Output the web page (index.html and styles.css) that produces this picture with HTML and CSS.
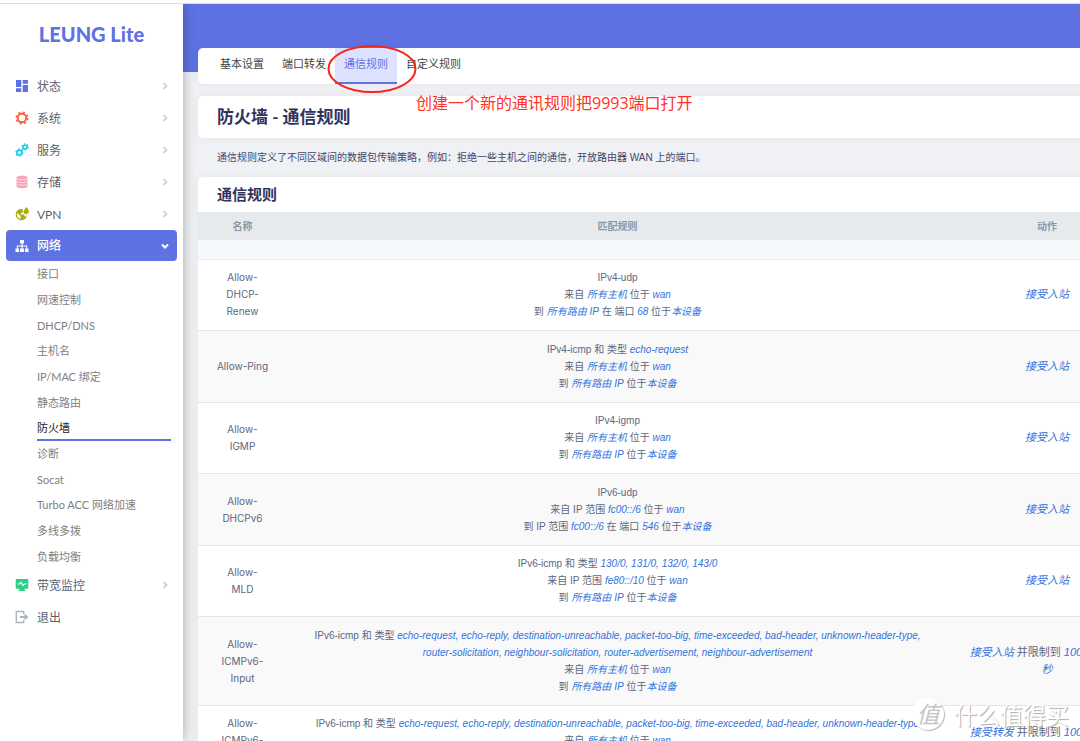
FILE: index.html
```html
<!DOCTYPE html>
<html lang="zh-CN">
<head>
<meta charset="utf-8">
<title>LEUNG Lite - 防火墙</title>
<link rel="stylesheet" href="styles.css">
</head>
<body>
<div class="app">
  <aside class="sidebar">
    <a class="brand" href="#">LEUNG Lite</a>
    <nav>
      <ul class="menu">
        <li><a class="item" href="#"><svg class="icon" viewBox="0 0 14 14" fill="#5e72e4"><path d="M1 1h5.300v7H1zM7.700 1H13v3.800H7.700zM1 9.300h5.300V13H1zM7.700 6H13v7H7.700z"/></svg><span>状态</span><svg class="chev" viewBox="0 0 8 8"><path d="M2.500 1l3 3-3 3"/></svg></a></li>
        <li><a class="item" href="#"><svg class="icon" viewBox="0 0 14 14" fill="none" stroke="#fb6340"><circle cx="7" cy="7" r="4.200" stroke-width="2"/><circle cx="7" cy="7" r="5.700" stroke-width="1.500" stroke-dasharray="2.200 2.280"/></svg><span>系统</span><svg class="chev" viewBox="0 0 8 8"><path d="M2.500 1l3 3-3 3"/></svg></a></li>
        <li><a class="item" href="#"><svg class="icon" viewBox="0 0 14 14" fill="none" stroke="#11cdef"><circle cx="4.400" cy="9.600" r="2.400" stroke-width="1.700"/><circle cx="4.400" cy="9.600" r="3.500" stroke-width="1.200" stroke-dasharray="1.800 1.860"/><circle cx="10" cy="4" r="2" stroke-width="1.600"/><circle cx="10" cy="4" r="3.100" stroke-width="1.200" stroke-dasharray="1.600 1.640"/></svg><span>服务</span><svg class="chev" viewBox="0 0 8 8"><path d="M2.500 1l3 3-3 3"/></svg></a></li>
        <li><a class="item" href="#"><svg class="icon" viewBox="0 0 14 14"><path fill="#f3a4b5" d="M1.500 2.500C1.500 .3 12.500 .3 12.500 2.500v9c0 2.200-11 2.200-11 0z"/><path fill="none" stroke="#fff" stroke-width=".6" d="M1.500 3.500c1 1.500 10 1.500 11 0M1.500 6.300c1 1.500 10 1.500 11 0M1.500 9.100c1 1.500 10 1.500 11 0"/></svg><span>存储</span><svg class="chev" viewBox="0 0 8 8"><path d="M2.500 1l3 3-3 3"/></svg></a></li>
        <li><a class="item" href="#"><svg class="icon" viewBox="0 0 14 14"><circle cx="6.500" cy="7.500" r="5.800" fill="#a9ad0b"/><path fill="#fff" d="M2 6l3.500 3v3C3 11.500 1.500 9 2 6zM7 3l2 1.500L6.500 6 5 7.500h3.500L10 9l1 1.500 1-3L9 6.500V1.500z"/><path fill="#a9ad0b" d="M9.500 3h.6V2a1.400 1.400 0 0 1 2.800 0v1h.8v3H9.500z"/></svg><span>VPN</span><svg class="chev" viewBox="0 0 8 8"><path d="M2.500 1l3 3-3 3"/></svg></a></li>
        <li>
          <a class="item active" href="#"><svg class="icon" viewBox="0 0 14 14" fill="#fff"><path d="M5 1h4v3.500H7.500V6.500h4.700V9.500H13.500V13H10V9.500h1.200v-2H7.500v2H9V13H5V9.500h1.500v-2H2.800v2H4V13H.5V9.500h1.300v-3h4.700v-2H5z"/></svg><span>网络</span><svg class="chev" viewBox="0 0 8 8"><path d="M1 2.500l3 3 3-3"/></svg></a>
          <ul class="submenu">
            <li><a href="#">接口</a></li>
            <li><a href="#">网速控制</a></li>
            <li><a href="#">DHCP/DNS</a></li>
            <li><a href="#">主机名</a></li>
            <li><a href="#">IP/MAC 绑定</a></li>
            <li><a href="#">静态路由</a></li>
            <li><a class="current" href="#">防火墙</a></li>
            <li><a href="#">诊断</a></li>
            <li><a href="#">Socat</a></li>
            <li><a href="#">Turbo ACC 网络加速</a></li>
            <li><a href="#">多线多拨</a></li>
            <li><a href="#">负载均衡</a></li>
          </ul>
        </li>
        <li><a class="item" href="#"><svg class="icon" viewBox="0 0 14 14"><path fill="#2dce89" d="M1.500 1h11q.8 0 .8.800v8.200q0 .8-.8.800H9.500v1.200h1V13h-7v-1h1v-1.200h-3Q.7 10.800.7 10V1.800Q.7 1 1.500 1z"/><path fill="none" stroke="#fff" stroke-width="1.100" d="M2.500 6h2.200L6 4.300 8 7.500 9.300 6h2.200"/></svg><span>带宽监控</span><svg class="chev" viewBox="0 0 8 8"><path d="M2.500 1l3 3-3 3"/></svg></a></li>
        <li><a class="item" href="#"><svg class="icon" viewBox="0 0 14 14"><path fill="none" stroke="#adb5bd" stroke-width="1.400" d="M8.700 4V1.500H1.300v11h7.400V10"/><path fill="#adb5bd" d="M5 6h4.500V3.500L13.500 7l-4 3.500V8H5z"/></svg><span>退出</span></a></li>
      </ul>
    </nav>
  </aside>
  <main class="main">
    <div class="content">
      <nav class="card tabs">
        <a href="#">基本设置</a><a href="#">端口转发</a><a class="selected" href="#">通信规则<svg class="ring" viewBox="0 0 90 50"><ellipse cx="45" cy="25" rx="43.500" ry="23"/></svg></a><a href="#">自定义规则</a>
      </nav>
      <header class="card heading">
        <h1>防火墙 - 通信规则</h1>
        <p class="note">创建一个新的通讯规则把9993端口打开</p>
      </header>
      <p class="desc">通信规则定义了不同区域间的数据包传输策略，例如：拒绝一些主机之间的通信，开放路由器 WAN 上的端口。</p>
      <section class="card rules">
        <h2>通信规则</h2>
        <table>
          <colgroup><col class="col-name"><col><col class="col-action"></colgroup>
          <thead>
            <tr><th>名称</th><th>匹配规则</th><th>动作</th></tr>
            <tr class="blank"><td colspan="3"></td></tr>
          </thead>
          <tbody>
            <tr><td>Allow-<br>DHCP-<br>Renew</td><td>IPv4-udp<br>来自 <var>所有主机</var> 位于 <var>wan</var><br>到 <var>所有路由 IP</var> 在 端口 <var>68</var> 位于<var>本设备</var></td><td><var>接受入站</var></td></tr>
            <tr><td>Allow-Ping</td><td>IPv4-icmp 和 类型 <var>echo-request</var><br>来自 <var>所有主机</var> 位于 <var>wan</var><br>到 <var>所有路由 IP</var> 位于<var>本设备</var></td><td><var>接受入站</var></td></tr>
            <tr><td>Allow-<br>IGMP</td><td>IPv4-igmp<br>来自 <var>所有主机</var> 位于 <var>wan</var><br>到 <var>所有路由 IP</var> 位于<var>本设备</var></td><td><var>接受入站</var></td></tr>
            <tr><td>Allow-<br>DHCPv6</td><td>IPv6-udp<br>来自 IP 范围 <var>fc00::/6</var> 位于 <var>wan</var><br>到 IP 范围 <var>fc00::/6</var> 在 端口 <var>546</var> 位于<var>本设备</var></td><td><var>接受入站</var></td></tr>
            <tr><td>Allow-<br>MLD</td><td>IPv6-icmp 和 类型 <var>130/0, 131/0, 132/0, 143/0</var><br>来自 IP 范围 <var>fe80::/10</var> 位于 <var>wan</var><br>到 <var>所有路由 IP</var> 位于<var>本设备</var></td><td><var>接受入站</var></td></tr>
            <tr><td>Allow-<br>ICMPv6-<br>Input</td><td>IPv6-icmp 和 类型 <var>echo-request, echo-reply, destination-unreachable, packet-too-big, time-exceeded, bad-header, unknown-header-type,<br>router-solicitation, neighbour-solicitation, router-advertisement, neighbour-advertisement</var><br>来自 <var>所有主机</var> 位于 <var>wan</var><br>到 <var>所有路由 IP</var> 位于<var>本设备</var></td><td><var>接受入站</var> 并限制到 <var>100 数据包 /<br>秒</var></td></tr>
            <tr><td>Allow-<br>ICMPv6-<br>Forward</td><td>IPv6-icmp 和 类型 <var>echo-request, echo-reply, destination-unreachable, packet-too-big, time-exceeded, bad-header, unknown-header-type</var><br>来自 <var>所有主机</var> 位于 <var>wan</var><br>到 <var>所有主机</var></td><td><var>接受转发</var> 并限制到 <var>100 数据包 /<br>秒</var></td></tr>
          </tbody>
        </table>
      </section>
    </div>
  </main>
</div>
<div class="watermark"><span class="seal">值</span><span>什么值得买</span></div>
</body>
</html>
```
FILE: styles.css
```css
* { box-sizing: border-box; }
body {
  margin: 0;
  height: 100vh;
  overflow: hidden;
  display: flex;
  flex-direction: column;
  background: #fff;
  color: #5d6780;
  font: 10px/17px "Liberation Sans", "Noto Sans CJK SC", sans-serif;
}
a { color: inherit; text-decoration: none; }
ul { list-style: none; margin: 0; padding: 0; }
h1, h2, p { margin: 0; }

.app {
  flex: 1;
  min-height: 0;
  margin-top: 3px;
  border-top: 1px solid #dcdcdc;
  display: flex;
  overflow: hidden;
}

.sidebar {
  width: 183px;
  flex: none;
  background: #fff;
  box-shadow: 0 0 12px rgba(0, 0, 0, .3);
  z-index: 1;
  font-family: Lato, "Noto Sans CJK SC", sans-serif;
}
.brand {
  display: block;
  padding: 15px 0 21px;
  text-align: center;
  color: #5e72e4;
  font-size: 20px;
  line-height: 30px;
  font-weight: 900;
}
.item {
  display: flex;
  align-items: center;
  height: 32px;
  margin: 0 6px;
  padding: 0 8px 0 9px;
  border-radius: 4px;
  color: #5c5f6e;
  font-size: 12px;
}
.item span { flex: 1; }
.icon { width: 14px; height: 14px; margin-right: 8px; }
.chev { width: 8px; height: 8px; fill: none; stroke: #ced4da; stroke-width: 2; }
.item.active { height: 31px; background: #5e72e4; color: #fff; font-weight: 500; }
.active .chev { stroke: #fff; }
.submenu { padding: 0 12px 0 37px; font-size: 11px; color: #808080; }
.submenu a { display: block; height: 26px; line-height: 26px; }
.submenu li:nth-child(3n) a { height: 25px; line-height: 25px; }
.submenu .current { color: #222; border-bottom: 2px solid #5e72e4; }

.main {
  flex: 1;
  min-width: 0;
  overflow: hidden;
  padding: 44px 0 0 15px;
  background: linear-gradient(#5e72e4, #5e72e4) 0 0 / 100% 68px no-repeat, #f0f1f4;
}
.content { min-width: 948px; }
.card { background: #fff; border-radius: 5px; box-shadow: 0 0 8px rgba(60, 70, 90, .06); }

.tabs { display: flex; height: 36px; padding-left: 13px; font-size: 11px; line-height: 33px; color: #444; }
.tabs a { padding: 0 9px; }
.tabs .selected { position: relative; background: #dee2ff; color: #5e72e4; border-bottom: 2px solid #5e72e4; }
.ring { position: absolute; left: -8px; top: -4px; width: 90px; height: 50px; fill: none; stroke: #f5261b; stroke-width: 2; z-index: 1; }

.heading { position: relative; margin-top: 12px; padding: 0 19px; }
.heading h1 { font-family: Lato, "Noto Sans CJK SC", sans-serif; font-size: 17px; line-height: 42px; color: #32325d; }
.note { position: absolute; left: 218px; top: -5px; color: #ff3226; font: 16px/24px "Open Sans", "Noto Sans CJK SC", sans-serif; }
.desc { padding: 11px 19px; color: #44456a; }

.rules h2 { padding: 0 19px; font-size: 15px; line-height: 35px; color: #32325d; border-bottom: 1px solid #e3e6e9; }
table { width: 100%; table-layout: fixed; border-collapse: separate; border-spacing: 0; text-align: center; }
.col-name { width: 89px; }
.col-action { width: 198px; }
th { height: 27px; padding: 0; background: #e7eaed; color: #8898aa; font-weight: 700; }
.blank td { height: 20px; padding: 0; background: #f6f9fc; border-bottom: 1px solid #ebecee; }
tbody td { padding: 9px 0 10px; border-bottom: 1px solid #e4e5e7; vertical-align: middle; white-space: nowrap; }
tbody tr:nth-child(even) td { background: #f9f9f9; padding-top: 10px; }
tbody td:first-child { font-family: Inter, sans-serif; }
tbody td:last-child { font-size: 11px; }
var { color: #3273dc; font-style: italic; }

.watermark {
  position: absolute;
  right: 11px;
  bottom: 10px;
  display: flex;
  align-items: center;
  gap: 10px;
  color: #fff;
  font: 23px/34px "Noto Sans CJK SC", sans-serif;
  text-shadow: 1px 1px 1px #aaa;
  z-index: 2;
}
.seal { width: 32px; height: 32px; border-radius: 50%; background: #fff; color: #c4c4c4; text-align: center; line-height: 30px; font-style: italic; text-shadow: none; box-shadow: 1px 1px 1px #bbb; }
```
